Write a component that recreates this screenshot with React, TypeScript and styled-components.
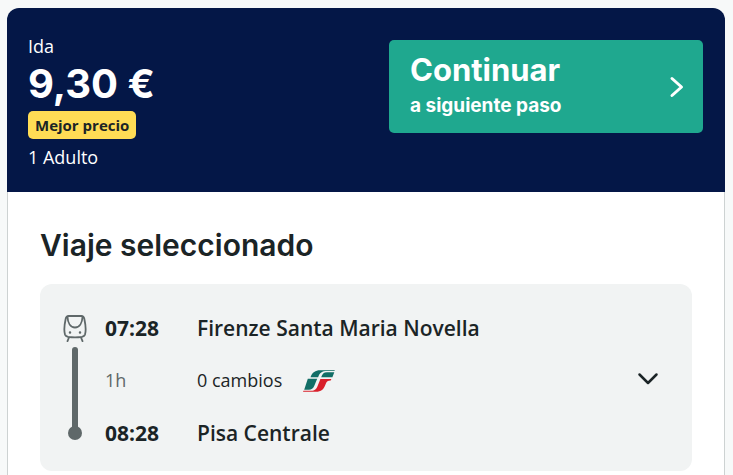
import React from "react";
import styled, { createGlobalStyle } from "styled-components";

const body = `"Segoe UI", "Open Sans", "Noto Sans", sans-serif`;
const display = `Circular, Inter, "Liberation Sans", sans-serif`;

const GlobalStyle = createGlobalStyle`
  *, *::before, *::after { box-sizing: border-box; }
  html { overflow: hidden; }
  body {
    margin: 0;
    background: #f7f9f9;
    color: #1b2426;
    font-family: ${body};
  }
`;

const Card = styled.main`
  margin: 8px 8px 0 7px;
  border-radius: 12px 12px 0 0;
  overflow: hidden;
  background: #fff;
`;

const Summary = styled.header`
  display: grid;
  grid-template-columns: 1fr 1fr;
  gap: 47px;
  align-items: start;
  padding: 24px 22px 21px 21px;
  background: #041747;
  color: #fff;
`;

const Fare = styled.div`
  display: flex;
  flex-direction: column;
  align-items: flex-start;
`;

const FareLine = styled.span`
  font-size: 18px;
  line-height: 28px;
`;

const Price = styled.strong`
  font-family: ${display};
  font-size: 40px;
  font-weight: 700;
  line-height: 48px;
  white-space: nowrap;
`;

const Badge = styled.span`
  margin: 3px 0 4px;
  padding: 0 7px;
  border-radius: 5px;
  background: #ffdc55;
  color: #1b2426;
  font-size: 15px;
  font-weight: 700;
  line-height: 28px;
  white-space: nowrap;
`;

const ContinueButton = styled.button`
  display: flex;
  align-items: center;
  justify-content: space-between;
  margin-top: 8px;
  padding: 10px 18px 11px 21px;
  border: 0;
  border-radius: 5px;
  background: #1fa88f;
  color: #fff;
  font-family: ${display};
  text-align: left;
  cursor: pointer;
`;

const ButtonText = styled.span`
  display: flex;
  flex-direction: column;
`;

const ButtonTitle = styled.span`
  font-size: 31px;
  font-weight: 700;
  line-height: 40px;
`;

const ButtonNote = styled.span`
  font-size: 19px;
  font-weight: 700;
  line-height: 32px;
`;

const Details = styled.section`
  padding: 31px 32px 16px;
  border: solid #cdd2d2;
  border-width: 0 1px;
`;

const Title = styled.h1`
  margin: 0 0 17px;
  font-family: ${display};
  font-size: 30px;
  font-weight: 600;
  line-height: 44px;
`;

const Trip = styled.article`
  display: grid;
  grid-template-columns: 24px 74px 1fr 24px;
  column-gap: 18px;
  padding: 18px 32px 12px 23px;
  border-radius: 12px;
  background: #f1f3f3;
`;

const Track = styled.div`
  grid-row: 1 / 4;
  display: flex;
  flex-direction: column;
  align-items: center;
  padding: 13px 0 19px;
`;

const Line = styled.span`
  flex: 1;
  width: 6px;
  margin: 5px 0 -4px;
  border-radius: 3px;
  background: #5f6869;
`;

const Dot = styled.span`
  width: 14px;
  height: 14px;
  border-radius: 50%;
  background: #5f6869;
`;

const Time = styled.time`
  font-size: 21px;
  font-weight: 700;
  line-height: 52px;
`;

const Station = styled.span`
  grid-column: 3 / 5;
  font-size: 21px;
  font-weight: 600;
  line-height: 52px;
`;

const Duration = styled.span`
  color: #5f6869;
  font-size: 18px;
  line-height: 53px;
`;

const Changes = styled.span`
  display: flex;
  align-items: center;
  gap: 21px;
  font-size: 18px;
  line-height: 53px;
`;

const Toggle = styled.button`
  display: flex;
  align-items: center;
  justify-content: center;
  padding: 0 0 4px;
  border: 0;
  background: none;
  color: #1b2426;
  cursor: pointer;
`;

const TrainIcon = () => (
  <svg width="24" height="27" viewBox="0 0 24 27" fill="none" stroke="#5f6869" strokeWidth="1.8" strokeLinecap="round" strokeLinejoin="round" aria-hidden="true">
    <path d="M5.500 1h13c1.700 0 2.400 1 2.800 2.800 1 4.500 1.800 12.200.7 15.800-.5 1.400-1.500 2-3 2.300-4.200.6-9.800.6-14 0-1.500-.3-2.500-.9-3-2.300C.9 16 1.700 8.300 2.700 3.800 3.100 2 3.800 1 5.500 1Z" />
    <path d="M4.500 2c.3 6 3 10.500 7.500 10.500S19.200 8 19.500 2M6 22.500l-1.500 3.700M18 22.500l1.500 3.700" />
    <path d="M7 17.400h.01M17 17.400h.01" strokeWidth="2.500" />
  </svg>
);

const OperatorLogo = () => (
  <svg width="32" height="22" viewBox="0 0 32 22" role="img" aria-label="Trenitalia">
    <path fill="#126e66" d="M7.500 7.200C9.200 2.200 12.500.2 17 .2h14.800l-.3.800H24c-5 0-7.300 1.700-8.900 6.200Z" />
    <path fill="#126e66" d="M24 2.200h7.300l-1.900 5H18.200c.9-3.200 2.600-4.900 5.800-5ZM4.800 8.800h9.400L11.200 16c-1.200 2.600-2.700 3.800-5.200 3.800H1.200Z" />
    <path fill="#d9202b" d="M17.400 8.900H28.400l-.7 1.600c-3 0-4 .8-4.900 3.300C20.700 19.900 18.100 21.800 12.900 21.800H0l.4-1h7.800c3.700 0 5.200-1.500 6.500-5Z" />
  </svg>
);

const Chevron = ({ direction }: { direction: "right" | "down" }) => (
  <svg width={direction === "right" ? 16 : 22} height={direction === "right" ? 24 : 14} viewBox={direction === "right" ? "0 0 16 24" : "0 0 22 14"} fill="none" stroke="currentColor" strokeWidth={direction === "right" ? 3 : 2.5} strokeLinecap="round" strokeLinejoin="round" aria-hidden="true">
    <path d={direction === "right" ? "M3 4.500l9.500 8.500L3 21.500" : "M2.500 2.500l8.500 8.500 8.500-8.500"} />
  </svg>
);

export default function App() {
  return (
    <>
      <GlobalStyle />
      <Card>
        <Summary>
          <Fare>
            <FareLine>Ida</FareLine>
            <Price>9,30 €</Price>
            <Badge>Mejor precio</Badge>
            <FareLine>1 Adulto</FareLine>
          </Fare>
          <ContinueButton type="button">
            <ButtonText>
              <ButtonTitle>Continuar</ButtonTitle>
              <ButtonNote>a siguiente paso</ButtonNote>
            </ButtonText>
            <Chevron direction="right" />
          </ContinueButton>
        </Summary>
        <Details>
          <Title>Viaje seleccionado</Title>
          <Trip>
            <Track>
              <TrainIcon />
              <Line />
              <Dot />
            </Track>
            <Time>07:28</Time>
            <Station>Firenze Santa Maria Novella</Station>
            <Duration>1h</Duration>
            <Changes>
              0 cambios
              <OperatorLogo />
            </Changes>
            <Toggle type="button" aria-label="Ver detalles del viaje" aria-expanded="false">
              <Chevron direction="down" />
            </Toggle>
            <Time>08:28</Time>
            <Station>Pisa Centrale</Station>
          </Trip>
        </Details>
      </Card>
    </>
  );
}
